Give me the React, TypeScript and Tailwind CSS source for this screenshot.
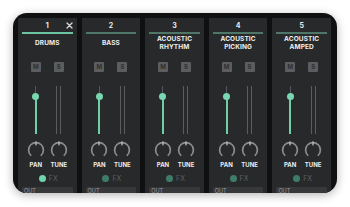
import React from 'react';

// Mixer strips — dark panel with five channel strips, cut off at the bottom

interface Channel {
  id: number;
  title: string[];
  active?: boolean;
}

const channels: Channel[] = [
  { id: 1, title: ['DRUMS'], active: true },
  { id: 2, title: ['BASS'] },
  { id: 3, title: ['ACOUSTIC', 'RHYTHM'] },
  { id: 4, title: ['ACOUSTIC', 'PICKING'] },
  { id: 5, title: ['ACOUSTIC', 'AMPED'] },
];

function Knob() {
  // 270deg arc open at the bottom, small pointer at the top
  const r = 7.4;
  const c = 9;
  const a0 = (135 * Math.PI) / 180;
  const a1 = (45 * Math.PI) / 180;
  const x0 = c + r * Math.cos(a0);
  const y0 = c + r * Math.sin(a0);
  const x1 = c + r * Math.cos(a1);
  const y1 = c + r * Math.sin(a1);
  return (
    <svg width="18" height="18" viewBox="0 0 18 18">
      <path
        d={`M ${x0} ${y0} A ${r} ${r} 0 1 1 ${x1} ${y1}`}
        fill="none"
        stroke="#8b8c8e"
        strokeWidth="1.7"
        strokeLinecap="round"
      />
      <line x1="9" y1="0.8" x2="9" y2="4" stroke="#c8c9ca" strokeWidth="1.2" strokeLinecap="round" />
    </svg>
  );
}

function SmallButton({ label }: { label: string }) {
  return (
    <div className="w-[10px] h-[10px] rounded-[1px] bg-[#5c5d5f] flex items-center justify-center text-[6px] font-bold leading-none text-[#2f3032]">
      {label}
    </div>
  );
}

function Strip({ ch }: { ch: Channel }) {
  return (
    <div className="flex-1 h-full bg-[#27292b] flex flex-col overflow-hidden [&>*]:shrink-0">
      {/* header: number + close */}
      <div className="relative h-[14px] flex items-center justify-center">
        <span className="text-[7px] font-bold leading-none text-[#ececec]">{ch.id}</span>
        {ch.active && (
          <svg className="absolute right-[4px] top-[4px]" width="7" height="7" viewBox="0 0 7 7">
            <path d="M1 1 L6 6 M6 1 L1 6" stroke="#d9d9d9" strokeWidth="1.3" strokeLinecap="round" />
          </svg>
        )}
      </div>
      <div className={`mx-[4px] h-[2px] ${ch.active ? 'bg-[#6cc3a0]' : 'bg-[#4e7767]'}`} />

      {/* title */}
      <div className="h-[18px] flex flex-col items-center justify-center text-[6.5px] font-bold leading-[8px] text-[#f0f0f0] tracking-[0.1px]">
        {ch.title.map((t) => (
          <span key={t}>{t}</span>
        ))}
      </div>

      <div className="grid grid-cols-2 mx-auto w-[46px] mt-[10px]">
        {/* M / S */}
        <div className="flex justify-center">
          <SmallButton label="M" />
        </div>
        <div className="flex justify-center">
          <SmallButton label="S" />
        </div>

        {/* fader + meter */}
        <div className="flex justify-center mt-[14px]">
          <div className="relative w-[8px] h-[48px] flex flex-col items-center">
            <div className="w-px h-[10px] bg-[#55565a]" />
            <div className="w-[2px] flex-1 bg-[#6fd0a8]" />
            <div className="absolute top-[6.5px] w-[7px] h-[7px] rounded-full bg-[#7ad6b0]" />
          </div>
        </div>
        <div className="flex justify-center mt-[14px]">
          <div className="h-[48px] flex gap-[3px]">
            <div className="w-px h-full bg-[#5b5c5e]" />
            <div className="w-px h-full bg-[#5b5c5e]" />
          </div>
        </div>

        {/* knobs */}
        <div className="flex justify-center mt-[7px]">
          <Knob />
        </div>
        <div className="flex justify-center mt-[7px]">
          <Knob />
        </div>
        <div className="text-center text-[6px] font-bold leading-[7px] text-[#ededed] mt-[2px]">PAN</div>
        <div className="text-center text-[6px] font-bold leading-[7px] text-[#ededed] mt-[2px]">TUNE</div>
      </div>

      {/* FX */}
      <div className="flex items-center justify-center gap-[3px] mt-[7px] pl-[2px]">
        <div className={`w-[7px] h-[7px] rounded-full ${ch.active ? 'bg-[#6fd3ac]' : 'bg-[#3f7c66]'}`} />
        <span className="text-[7px] leading-none text-[#5e5f61]">FX</span>
      </div>

      {/* OUT */}
      <div className="mx-[4px] mt-[5px] h-[20px] bg-[#37383a] rounded-[1px] px-[2px] pt-[1px]">
        <span className="block text-[5.5px] leading-[6px] text-[#9a9b9d]">OUT</span>
      </div>
    </div>
  );
}

export default function App() {
  return (
    <div
      className="w-[350px] h-[207px] bg-white p-[13px]"
      style={{ fontFamily: 'Inter, "Noto Sans", sans-serif' }}
    >
      <div className="w-[324px] h-[180px] rounded-[14px] bg-[#0f1011] overflow-hidden pt-[5px] pl-[5px] pr-[6px] shadow-[0_2px_10px_rgba(0,0,0,0.3)]">
        <div className="flex gap-[5px] h-full">
          {channels.map((ch) => (
            <Strip key={ch.id} ch={ch} />
          ))}
        </div>
      </div>
    </div>
  );
}
